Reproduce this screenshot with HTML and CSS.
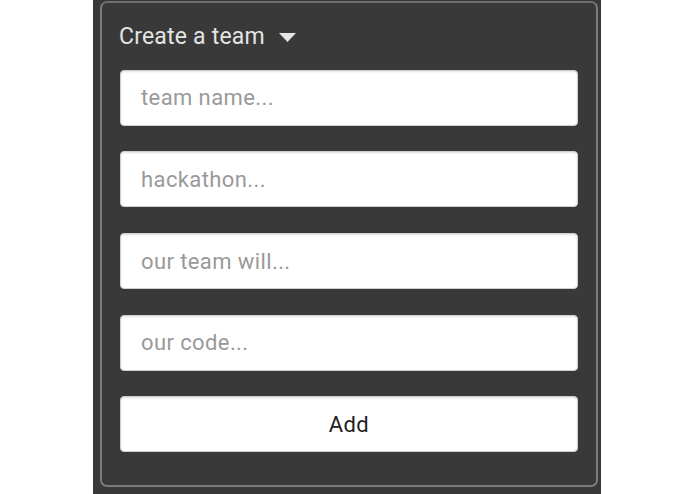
FILE: index.html
```html
<!DOCTYPE html>
<html lang="en">
<head>
<meta charset="utf-8">
<title>Create a team</title>
<link rel="stylesheet" href="styles.css">
</head>
<body>
<div class="shell">
  <form class="panel">
    <div class="panel-title">
      <span>Create a team</span>
      <svg class="caret" width="17" height="9" viewBox="0 0 17 9" aria-hidden="true">
        <polygon points="0,0 17,0 8.5,9" fill="#e4e4e4"/>
      </svg>
    </div>
    <input class="field" type="text" placeholder="team name...">
    <input class="field" type="text" placeholder="hackathon...">
    <input class="field" type="text" placeholder="our team will...">
    <input class="field" type="text" placeholder="our code...">
    <button class="field add" type="button">Add</button>
  </form>
</div>
</body>
</html>
```
FILE: styles.css
```css
html, body {
  margin: 0;
  padding: 0;
  background: #ffffff;
  height: 100%;
}

.shell {
  margin-left: 93px;
  width: 508px;
  min-height: 100%;
  background: #393939;
  padding: 1px 0 0 7px;
  box-sizing: border-box;
}

.panel {
  width: 498px;
  box-sizing: border-box;
  border: 2px solid #7b7b7b;
  border-top-color: #6e6e6e;
  border-radius: 7px;
  padding: 18px 18px 33px 18px;
  display: flex;
  flex-direction: column;
  gap: 25.7px;
  font-family: Roboto, "Helvetica Neue", Arial, sans-serif;
}

.panel-title {
  display: flex;
  align-items: center;
  gap: 14px;
  color: #e4e4e4;
  font-size: 23px;
  letter-spacing: 0.2px;
  line-height: 32px;
  height: 32px;
  margin-bottom: -9px;
  padding-left: 1px;
  margin-left: -2px;
}

.caret {
  margin-top: 1px;
}

.field {
  display: block;
  width: 100%;
  height: 56px;
  box-sizing: border-box;
  margin: 0;
  border: 1px solid #cfcfcf;
  border-radius: 4px;
  background: #ffffff;
  box-shadow: inset 0 1px 2px rgba(0, 0, 0, 0.12);
  padding: 0 20px;
  font-family: Roboto, "Helvetica Neue", Arial, sans-serif;
  font-size: 22px;
  letter-spacing: 0.4px;
  color: #222222;
  outline: none;
}

.field::placeholder {
  color: #999999;
  opacity: 1;
}

.add {
  text-align: center;
  color: #222222;
  cursor: pointer;
}
```
